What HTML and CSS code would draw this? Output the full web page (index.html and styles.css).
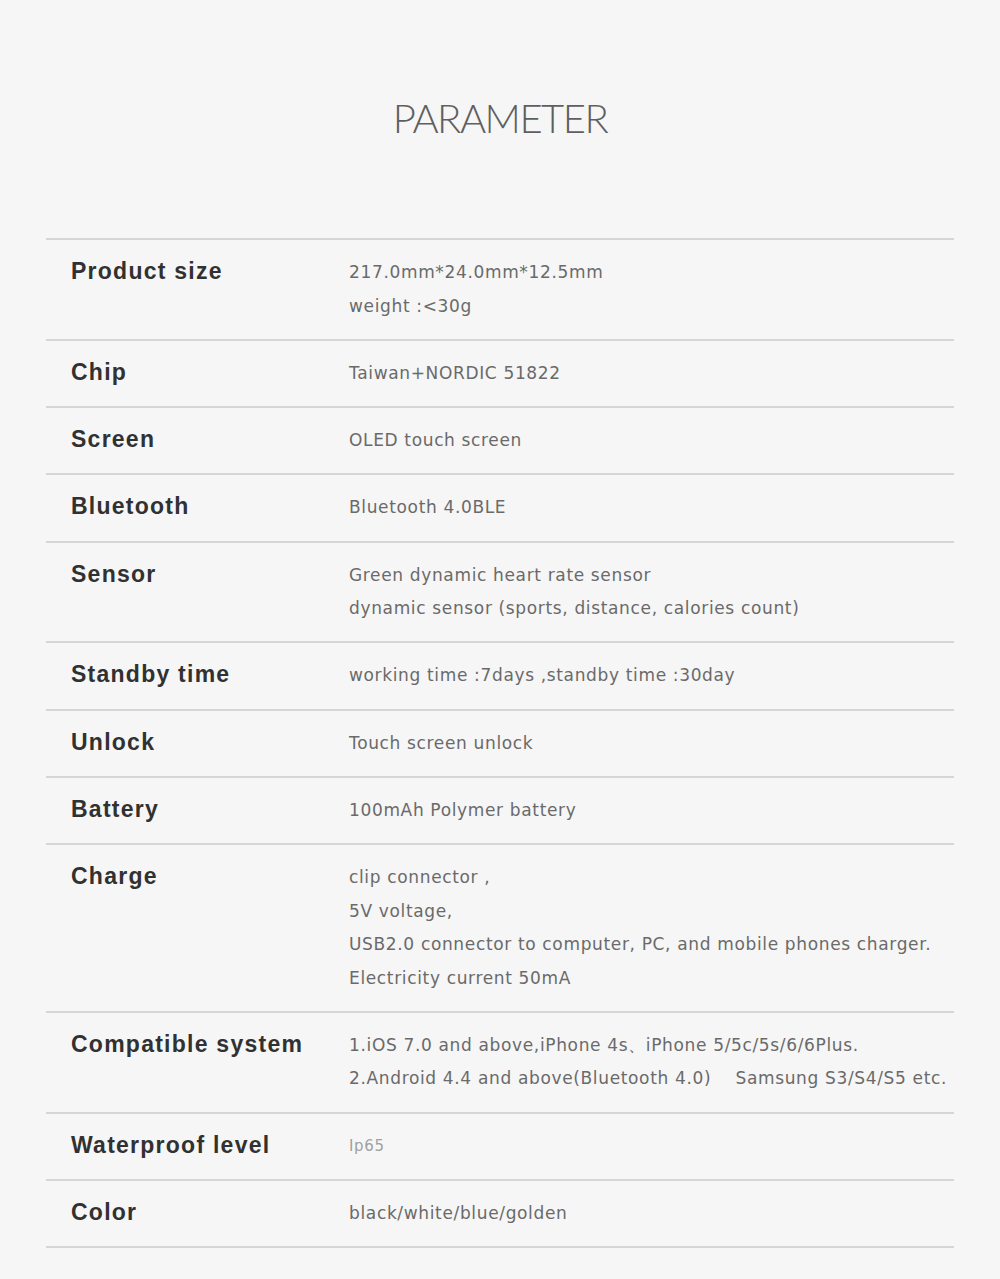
FILE: index.html
```html
<!DOCTYPE html>
<html>
<head>
<meta charset="utf-8">
<link rel="stylesheet" href="styles.css">
</head>
<body>
<div class="page">
  <h1 class="title">PARAMETER</h1>
  <div class="table">
    <div class="row"><div class="label">Product size</div><div class="val"><div>217.0mm*24.0mm*12.5mm</div><div>weight :&lt;30g</div></div></div>
    <div class="row"><div class="label">Chip</div><div class="val"><div>Taiwan+NORDIC 51822</div></div></div>
    <div class="row"><div class="label">Screen</div><div class="val"><div>OLED touch screen</div></div></div>
    <div class="row"><div class="label">Bluetooth</div><div class="val"><div>Bluetooth 4.0BLE</div></div></div>
    <div class="row"><div class="label">Sensor</div><div class="val"><div>Green dynamic heart rate sensor</div><div>dynamic sensor (sports, distance, calories count)</div></div></div>
    <div class="row"><div class="label">Standby time</div><div class="val"><div>working time :7days ,standby time :30day</div></div></div>
    <div class="row"><div class="label">Unlock</div><div class="val"><div>Touch screen unlock</div></div></div>
    <div class="row"><div class="label">Battery</div><div class="val"><div>100mAh Polymer battery</div></div></div>
    <div class="row"><div class="label">Charge</div><div class="val"><div>clip connector ,</div><div>5V voltage,</div><div>USB2.0 connector to computer, PC, and mobile phones charger.</div><div>Electricity current 50mA</div></div></div>
    <div class="row"><div class="label">Compatible system</div><div class="val"><div>1.iOS 7.0 and above,iPhone 4s、iPhone 5/5c/5s/6/6Plus.</div><div>2.Android 4.4 and above(Bluetooth 4.0)&nbsp;&nbsp;&nbsp;&nbsp;Samsung S3/S4/S5 etc.</div></div></div>
    <div class="row"><div class="label">Waterproof level</div><div class="val light"><div>Ip65</div></div></div>
    <div class="row last"><div class="label">Color</div><div class="val"><div>black/white/blue/golden</div></div></div>
  </div>
</div>
</body>
</html>
```
FILE: styles.css
```css
html, body {
  margin: 0;
  padding: 0;
  background: #f6f6f6;
}
.page {
  width: 1000px;
  height: 1279px;
  box-sizing: border-box;
  padding: 96px 46px 0;
  font-family: "DejaVu Sans", "Liberation Sans", sans-serif;
}
.title {
  margin: 0 0 98px;
  text-align: center;
  font-family: "Lato", "Liberation Sans", sans-serif;
  font-weight: 300;
  font-size: 40px;
  line-height: 44px;
  color: #5f5f5f;
  letter-spacing: -1.5px;
}
.table {
  display: flex;
  flex-direction: column;
}
.row {
  display: flex;
  border-top: 2px solid #d6d6d6;
  padding: 16px 0 15.75px 25px;
}
.row.last {
  border-bottom: 2px solid #d6d6d6;
}
.label {
  width: 278px;
  flex: none;
  font-family: "Liberation Sans", sans-serif;
  font-weight: bold;
  font-size: 23px;
  line-height: 30px;
  color: #313131;
  letter-spacing: 1.25px;
}
.val {
  font-size: 17px;
  line-height: 33.5px;
  color: #6a6a6a;
  letter-spacing: 0.65px;
}
.val.light {
  color: #a0a0a0;
  font-size: 15px;
}
```
